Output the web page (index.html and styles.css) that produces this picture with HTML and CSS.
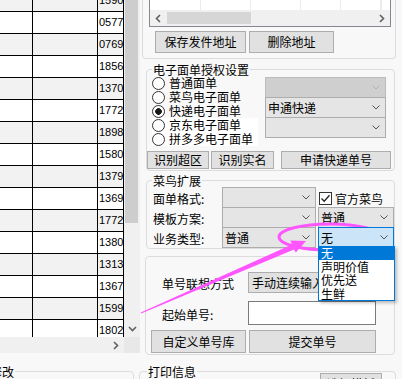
FILE: index.html
```html
<!DOCTYPE html>
<html lang="zh-CN">
<head>
  <meta charset="UTF-8">
  <title>电子面单设置</title>
  <link rel="stylesheet" href="styles.css">
</head>
<body>
  <div class="window">
    <div class="main">
      <div class="grid-pane">
        <div class="grid-view">
          <div class="grid-rows">
            <div class="grid-row alt"><span></span><span></span><span class="num">1590</span></div>
            <div class="grid-row"><span></span><span></span><span class="num">0577</span></div>
            <div class="grid-row alt"><span></span><span></span><span class="num">0769</span></div>
            <div class="grid-row"><span></span><span></span><span class="num">1856</span></div>
            <div class="grid-row alt"><span></span><span></span><span class="num">1370</span></div>
            <div class="grid-row"><span></span><span></span><span class="num">1772</span></div>
            <div class="grid-row alt"><span></span><span></span><span class="num">1898</span></div>
            <div class="grid-row"><span></span><span></span><span class="num">1580</span></div>
            <div class="grid-row alt"><span></span><span></span><span class="num">1379</span></div>
            <div class="grid-row"><span></span><span></span><span class="num">1369</span></div>
            <div class="grid-row alt"><span></span><span></span><span class="num">1772</span></div>
            <div class="grid-row"><span></span><span></span><span class="num">1380</span></div>
            <div class="grid-row alt"><span></span><span></span><span class="num">1313</span></div>
            <div class="grid-row"><span></span><span></span><span class="num">1367</span></div>
            <div class="grid-row alt"><span></span><span></span><span class="num">1599</span></div>
            <div class="grid-row"><span></span><span></span><span class="num">1802</span></div>
          </div>
          <div class="vscroll">
            <div class="vthumb"></div>
            <div class="scroll-btn">
              <svg class="chev bold" width="9" height="6" viewBox="0 0 9 6"><path d="M1 1 4.5 4.5 8 1"/></svg>
            </div>
          </div>
        </div>
        <div class="hscroll-row">
          <div class="hscroll">
            <svg class="chev bold" width="6" height="9" viewBox="0 0 6 9"><path d="M1 1 4.5 4.5 1 8"/></svg>
          </div>
          <div class="scroll-corner"></div>
        </div>
      </div>

      <div class="side">
        <div class="addr-frame">
          <div class="addr-list">
            <div class="addr-cells"><span class="c1"></span><span class="c2"></span><span class="c2"></span><span class="c3"></span><span class="c3"></span><span></span></div>
            <div class="addr-scroll">
              <div class="scroll-btn h">
                <svg class="chev bold" width="6" height="9" viewBox="0 0 6 9"><path d="M5 1 1.5 4.5 5 8"/></svg>
              </div>
              <div class="hthumb"></div>
              <div class="scroll-btn h">
                <svg class="chev bold" width="6" height="9" viewBox="0 0 6 9"><path d="M1 1 4.5 4.5 1 8"/></svg>
              </div>
            </div>
          </div>
          <div class="addr-buttons">
            <button class="btn btn-save">保存发件地址</button>
            <button class="btn btn-del">删除地址</button>
          </div>
        </div>

        <fieldset class="group auth">
          <legend>电子面单授权设置</legend>
          <div class="auth-body">
            <div class="radios">
              <label class="radio-item"><span class="radio"></span>普通面单</label>
              <label class="radio-item"><span class="radio"></span>菜鸟电子面单</label>
              <label class="radio-item"><span class="radio checked"></span>快递电子面单</label>
              <label class="radio-item white"><span class="radio"></span>京东电子面单</label>
              <label class="radio-item white"><span class="radio"></span>拼多多电子面单</label>
            </div>
            <div class="combo-stack">
              <div class="combo disabled"><span></span><svg class="chev" width="8" height="5" viewBox="0 0 8 5"><path d="M.5.5 4 4 7.5.5"/></svg></div>
              <div class="combo"><span>申通快递</span><svg class="chev" width="8" height="5" viewBox="0 0 8 5"><path d="M.5.5 4 4 7.5.5"/></svg></div>
              <div class="combo"><span></span><svg class="chev" width="8" height="5" viewBox="0 0 8 5"><path d="M.5.5 4 4 7.5.5"/></svg></div>
            </div>
          </div>
          <div class="auth-actions">
            <button class="btn btn-area">识别超区</button>
            <button class="btn btn-name">识别实名</button>
            <button class="btn btn-apply">申请快递单号</button>
          </div>
        </fieldset>

        <fieldset class="group cainiao">
          <legend>菜鸟扩展</legend>
          <div class="cn-body">
            <span class="cn-label">面单格式:</span>
            <div class="combo"><span></span><svg class="chev" width="8" height="5" viewBox="0 0 8 5"><path d="M.5.5 4 4 7.5.5"/></svg></div>
            <label class="check"><span class="checkbox"><svg width="11" height="11" viewBox="0 0 11 11"><path d="M1.5 5.5 4.2 8.3 9.5 2.2"/></svg></span>官方菜鸟</label>

            <span class="cn-label">模板方案:</span>
            <div class="combo"><span></span><svg class="chev" width="8" height="5" viewBox="0 0 8 5"><path d="M.5.5 4 4 7.5.5"/></svg></div>
            <div class="combo"><span>普通</span><svg class="chev" width="8" height="5" viewBox="0 0 8 5"><path d="M.5.5 4 4 7.5.5"/></svg></div>

            <span class="cn-label">业务类型:</span>
            <div class="combo"><span>普通</span><svg class="chev" width="8" height="5" viewBox="0 0 8 5"><path d="M.5.5 4 4 7.5.5"/></svg></div>
            <div class="combo focus">
              <span>无</span><svg class="chev" width="8" height="5" viewBox="0 0 8 5"><path d="M.5.5 4 4 7.5.5"/></svg>
              <ul class="dropdown">
                <li class="selected">无</li>
                <li>声明价值</li>
                <li>优先送</li>
                <li>生鲜</li>
              </ul>
            </div>
          </div>
        </fieldset>

        <div class="number-panel">
          <div class="num-row">
            <span class="num-label">单号联想方式</span>
            <button class="btn btn-mode">手动连续输入</button>
          </div>
          <div class="num-row start">
            <span class="num-label">起始单号:</span>
            <input class="textbox" type="text">
          </div>
          <div class="num-actions">
            <button class="btn btn-lib">自定义单号库</button>
            <button class="btn btn-submit">提交单号</button>
          </div>
        </div>
      </div>
    </div>

    <div class="footer-groups">
      <fieldset class="group edit"><legend>修改</legend></fieldset>
      <fieldset class="group print">
        <legend>打印信息</legend>
        <div class="print-body"><button class="btn btn-tpl">选择模板</button></div>
      </fieldset>
    </div>

    <!-- 标注：箭头和圈 -->
    <svg class="annotation" width="402" height="379" viewBox="0 0 402 379">
      <ellipse cx="330" cy="237" rx="51" ry="13" fill="none" stroke="#f5f" stroke-width="3"/>
      <polygon points="140.8,312.4 292,244.4 290.4,240.6 306,241 295.8,252.4 294,249.6 141.2,313.6" fill="#f5f"/>
    </svg>
  </div>
</body>
</html>
```

FILE: styles.css
```css
* {
  box-sizing: border-box;
}
body {
  margin: 0;
  background: #f8f8f8;
  color: #000;
  font-family: "Noto Sans CJK SC", "Noto Sans", sans-serif;
  font-size: 12px;
  line-height: 15px;
}
.window {
  position: relative;
  width: 402px;
  height: 379px;
  overflow: hidden;
}
.main {
  display: flex;
  height: 355px;
}

/* 左侧表格 */
.grid-pane {
  width: 140px;
  flex: none;
  display: flex;
  flex-direction: column;
}
.grid-view {
  display: flex;
  height: 337px;
  overflow: hidden;
}
.grid-rows {
  width: 124px;
  margin-top: -10px;
}
.grid-row {
  display: grid;
  grid-template-columns: 33px 65px 26px;
  height: 22px;
  background: #fff;
}
.grid-row.alt {
  background: #f2f2f2;
}
.grid-row span {
  border-right: 1px solid #000;
  border-bottom: 1px solid #000;
}
.num {
  font-family: "Liberation Sans", Arial, sans-serif;
  font-size: 11px;
  line-height: 21px;
  padding-left: 1px;
}
.vscroll {
  width: 16px;
  background: #f0f0f0;
  display: flex;
  flex-direction: column;
}
.vthumb {
  height: 223px;
  margin: 0 2px 0 1px;
  background: #cdcdcd;
}
.scroll-btn {
  margin-top: auto;
  height: 17px;
  display: flex;
  align-items: center;
  justify-content: center;
}
.scroll-btn.h {
  margin-top: 0;
  width: 16px;
  height: 100%;
  flex: none;
}
.chev path {
  fill: none;
  stroke: #555;
  stroke-width: 1;
}
.chev.bold path {
  stroke: #606060;
  stroke-width: 1.6;
}
.hscroll-row {
  display: flex;
  height: 18px;
}
.hscroll {
  width: 124px;
  height: 16px;
  background: #f0f0f0;
  display: flex;
  align-items: center;
  justify-content: flex-end;
  padding-right: 5px;
}
.scroll-corner {
  width: 16px;
  height: 16px;
  background: #e8e8e8;
}

/* 右侧 */
.side {
  flex: 1;
  padding-left: 2px;
}
.addr-frame {
  width: 254px;
  height: 59px;
  border: 1px solid #d9dde0;
  border-top: 0;
  border-radius: 0 0 4px 4px;
}
.addr-list {
  width: 242px;
  height: 27px;
  margin-left: 6px;
  border: 1px solid #828790;
  border-top: 0;
  background: #fff;
  display: flex;
  flex-direction: column;
}
.addr-cells {
  display: flex;
  height: 10px;
}
.addr-cells span {
  border-right: 1px solid #ececec;
}
.addr-cells .c1 { width: 51px; }
.addr-cells .c2 { width: 50px; }
.addr-cells .c3 { width: 40px; }
.addr-scroll {
  display: flex;
  align-items: center;
  height: 16px;
  background: #f0f0f0;
}
.hthumb {
  width: 84px;
  height: 12px;
  margin-left: 1px;
  margin-right: auto;
  background: #d6d6d6;
}
.addr-buttons {
  display: flex;
  gap: 3px;
  margin: 4px 0 0 12px;
}
.btn {
  height: 22px;
  padding: 0;
  border: 1px solid #adadad;
  background: #e1e1e1;
  color: #000;
  font-family: inherit;
  font-size: 12px;
  line-height: 20px;
  text-align: center;
}
.btn-save { width: 91px; }
.btn-del { width: 85px; }

.group {
  margin: 0;
  padding: 0;
  min-width: 0;
  border: 1px solid #dcdcdc;
  border-radius: 4px;
}
.group legend {
  margin-left: 5px;
  padding: 0 1px;
  line-height: 15px;
}
.auth {
  width: 249px;
  margin: 3px 0 0 4px;
  padding-bottom: 1px;
}
.auth-body {
  display: flex;
}
.radios {
  width: 106px;
  margin: -1px 0 0 5px;
}
.radio-item {
  display: flex;
  align-items: center;
  gap: 4px;
  height: 14px;
  line-height: 14px;
}
.radio-item.white {
  background: #fff;
}
.radio {
  width: 13px;
  height: 13px;
  flex: none;
  border: 1px solid #333;
  border-radius: 50%;
  background: #fff;
}
.radio.checked {
  background: radial-gradient(circle, #1a1a1a 3px, #fff 3.6px);
}
.combo-stack {
  width: 121px;
  margin-left: 7px;
}
.combo {
  display: flex;
  align-items: center;
  justify-content: space-between;
  height: 21px;
  padding: 0 5px 0 2px;
  border: 1px solid #adadad;
  background: #e5e5e5;
}
.combo-stack .combo + .combo {
  margin-top: -1px;
}
.combo.disabled {
  background: #cfcfcf;
  border-color: #bcbcbc;
}
.combo.disabled .chev path {
  stroke: #b0b0b0;
}
.auth-actions {
  display: flex;
  margin-top: 5px;
}
.auth-actions .btn {
  height: 18px;
  line-height: 16px;
}
.btn-area { width: 62px; }
.btn-name { width: 63px; margin-left: 2px; }
.btn-apply { width: 110px; margin-left: 7px; }

.cainiao {
  width: 249px;
  margin: 2px 0 0 4px;
  padding-bottom: 1px;
}
.cn-body {
  display: grid;
  grid-template-columns: 67px 94px 76px;
  grid-auto-rows: 20px;
  column-gap: 2px;
  margin: -1px 0 0 6px;
}
.cn-label {
  padding-top: 3px;
  line-height: 17px;
}
.cn-body .combo {
  align-self: start;
}
.check {
  display: flex;
  align-items: center;
  gap: 3px;
  padding: 2px 0 0 1px;
}
.checkbox {
  width: 13px;
  height: 13px;
  border: 1px solid #333;
  background: #fff;
  display: flex;
}
.checkbox path {
  fill: none;
  stroke: #222;
  stroke-width: 1.3;
}
.combo.focus {
  position: relative;
  z-index: 1;
  border-color: #0078d7;
  background: #cce4f7;
}
.dropdown {
  position: absolute;
  top: calc(100% - 1px);
  left: -1px;
  width: 77px;
  margin: 0;
  padding: 0;
  list-style: none;
  background: #fff;
  border: 1px solid #0078d7;
  border-top: 0;
  box-shadow: 2px 2px 3px rgba(0, 0, 0, 0.25);
}
.dropdown li {
  height: 13.5px;
  padding-left: 2px;
  line-height: 13.5px;
}
.dropdown li.selected {
  background: #0078d7;
  color: #fff;
}

.number-panel {
  width: 250px;
  height: 99px;
  margin: 7px 0 0 3px;
  padding-top: 15px;
  border: 1px solid #dcdcdc;
  border-radius: 4px;
}
.num-row {
  display: flex;
  align-items: center;
}
.num-row.start {
  margin-top: 8px;
}
.num-label {
  width: 102px;
  padding: 2px 0 0 16px;
}
.btn-mode {
  width: 85px;
  height: 21px;
  line-height: 19px;
  text-align: left;
  padding-left: 3px;
}
.textbox {
  width: 128px;
  height: 24px;
  margin: 0;
  border: 1px solid #7a7a7a;
  background: #fff;
}
.num-actions {
  display: flex;
  gap: 3px;
  margin: 5px 0 0 5px;
}
.num-actions .btn {
  height: 23px;
  line-height: 21px;
}
.btn-lib { width: 95px; }
.btn-submit { width: 127px; }

/* 底部分组 */
.footer-groups {
  display: flex;
  height: 24px;
  padding-top: 9px;
  overflow: hidden;
}
.footer-groups .group {
  height: 40px;
  flex: none;
}
.edit {
  width: 148px;
  margin-left: -14px;
}
.edit legend {
  margin-left: 2px;
}
.print {
  width: 257px;
  margin-left: 5px;
}
.print legend {
  margin-left: 7px;
}
.print-body {
  display: flex;
  justify-content: flex-end;
  margin-top: -6px;
  padding-right: 13px;
}
.btn-tpl {
  width: 62px;
}

.annotation {
  position: absolute;
  left: 0;
  top: 0;
  pointer-events: none;
}
```
